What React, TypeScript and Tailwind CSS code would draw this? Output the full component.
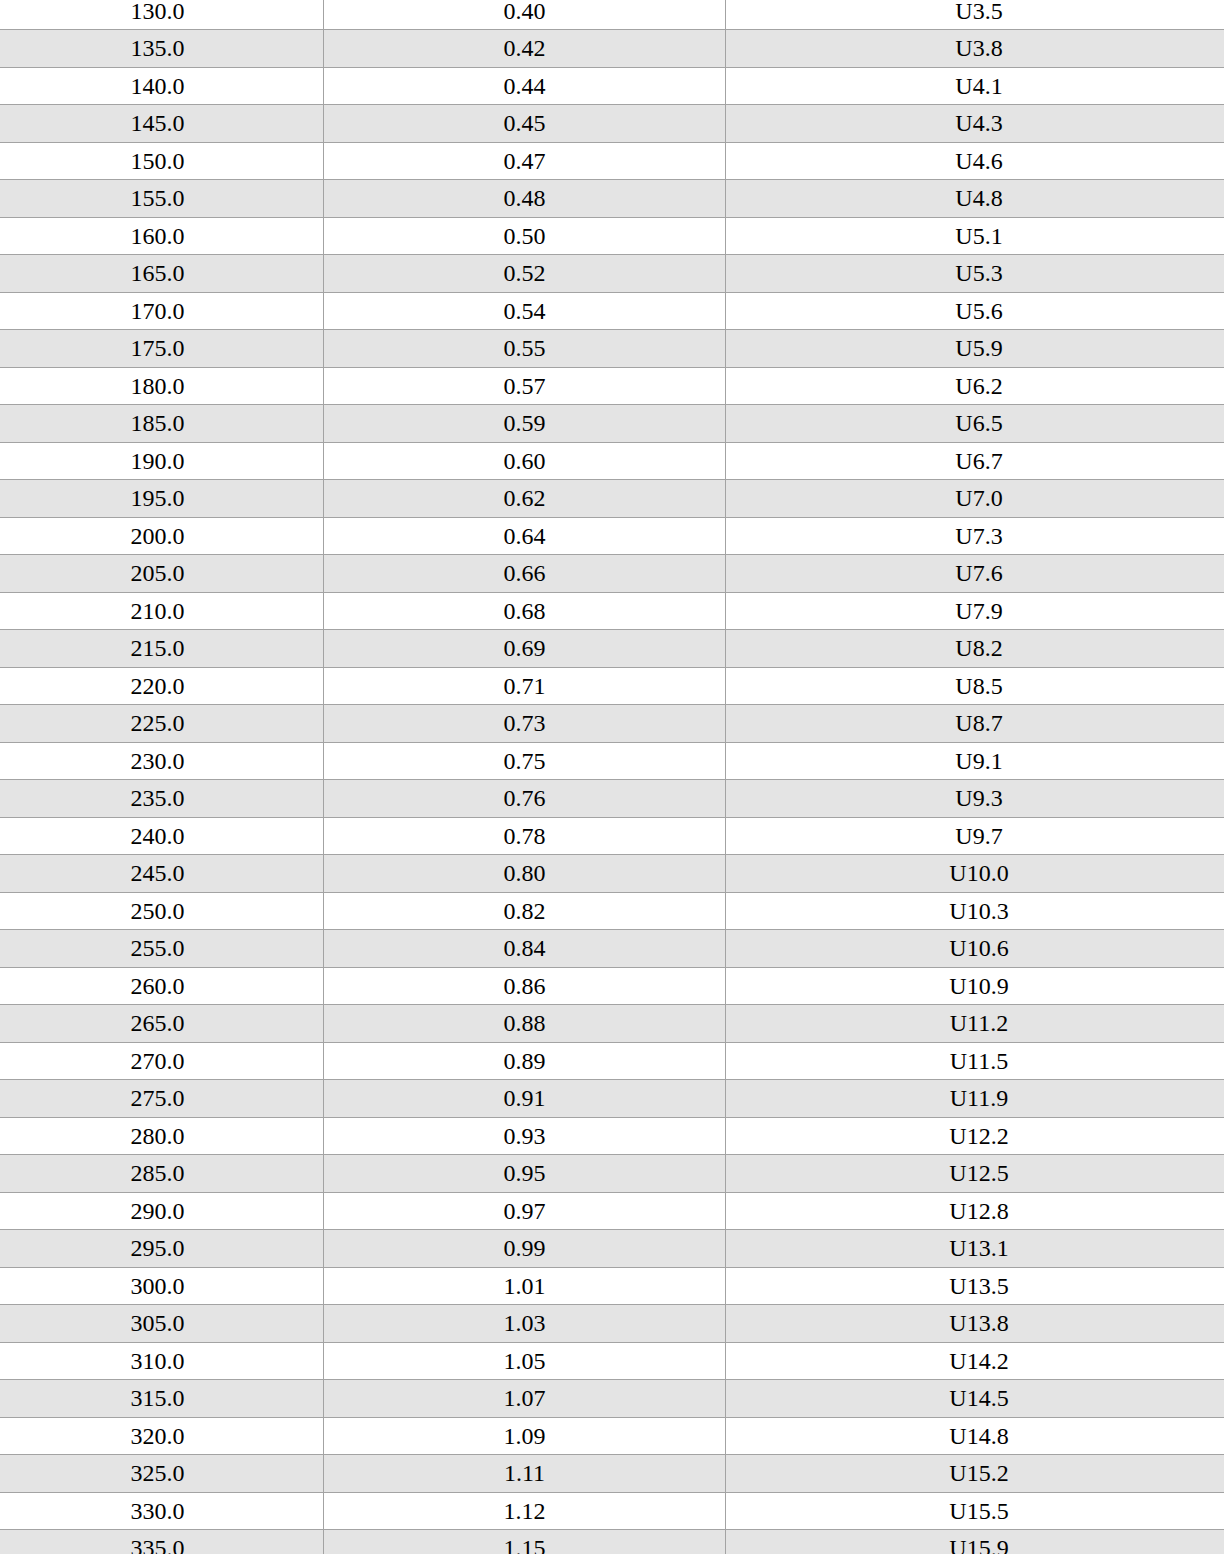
const rows: [string, string, string][] = [
  ["130.0", "0.40", "U3.5"],
  ["135.0", "0.42", "U3.8"],
  ["140.0", "0.44", "U4.1"],
  ["145.0", "0.45", "U4.3"],
  ["150.0", "0.47", "U4.6"],
  ["155.0", "0.48", "U4.8"],
  ["160.0", "0.50", "U5.1"],
  ["165.0", "0.52", "U5.3"],
  ["170.0", "0.54", "U5.6"],
  ["175.0", "0.55", "U5.9"],
  ["180.0", "0.57", "U6.2"],
  ["185.0", "0.59", "U6.5"],
  ["190.0", "0.60", "U6.7"],
  ["195.0", "0.62", "U7.0"],
  ["200.0", "0.64", "U7.3"],
  ["205.0", "0.66", "U7.6"],
  ["210.0", "0.68", "U7.9"],
  ["215.0", "0.69", "U8.2"],
  ["220.0", "0.71", "U8.5"],
  ["225.0", "0.73", "U8.7"],
  ["230.0", "0.75", "U9.1"],
  ["235.0", "0.76", "U9.3"],
  ["240.0", "0.78", "U9.7"],
  ["245.0", "0.80", "U10.0"],
  ["250.0", "0.82", "U10.3"],
  ["255.0", "0.84", "U10.6"],
  ["260.0", "0.86", "U10.9"],
  ["265.0", "0.88", "U11.2"],
  ["270.0", "0.89", "U11.5"],
  ["275.0", "0.91", "U11.9"],
  ["280.0", "0.93", "U12.2"],
  ["285.0", "0.95", "U12.5"],
  ["290.0", "0.97", "U12.8"],
  ["295.0", "0.99", "U13.1"],
  ["300.0", "1.01", "U13.5"],
  ["305.0", "1.03", "U13.8"],
  ["310.0", "1.05", "U14.2"],
  ["315.0", "1.07", "U14.5"],
  ["320.0", "1.09", "U14.8"],
  ["325.0", "1.11", "U15.2"],
  ["330.0", "1.12", "U15.5"],
  ["335.0", "1.15", "U15.9"],
];

export default function App() {
  return (
    <div className="h-[1554px] w-[1224px] overflow-hidden bg-white font-['Liberation_Serif','Times_New_Roman',serif] text-[24px] text-black">
      <div className="-mt-[7.5px] flex flex-col">
        {rows.map(([size, ratio, grade], i) => (
          <div
            key={size}
            className={
              i % 2 === 1
                ? "grid h-[37.5px] grid-cols-[323px_402px_1fr] border-b border-[#a3a3a3] bg-[#e4e4e4]"
                : "grid h-[37.5px] grid-cols-[323px_402px_1fr] border-b border-[#a3a3a3] bg-white"
            }
          >
            <div className="flex items-center justify-center pr-2 pb-[3px]">{size}</div>
            <div className="flex items-center justify-center border-l border-[#a3a3a3] pb-[3px]">
              {ratio}
            </div>
            <div className="flex items-center justify-center border-l border-[#a3a3a3] pl-2 pb-[3px]">
              {grade}
            </div>
          </div>
        ))}
      </div>
    </div>
  );
}
